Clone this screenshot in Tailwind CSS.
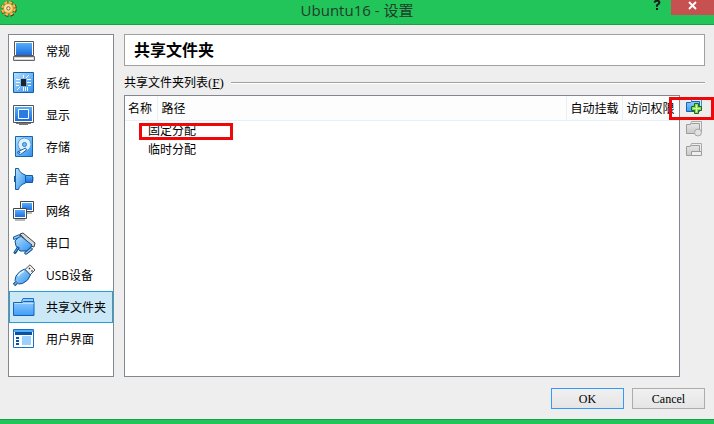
<!DOCTYPE html>
<html lang="zh-CN">
<head>
  <meta charset="UTF-8"/>
  <meta name="viewport" content="width=device-width, initial-scale=1.0"/>
  <title>Ubuntu16 - 设置</title>
  <script src="https://cdn.jsdelivr.net/npm/@tailwindcss/browser@4"></script>
</head>
<body class="min-h-screen flex flex-col bg-[#eeeeee] text-black text-[12px] leading-4 font-['Open_Sans','Noto_Sans_CJK_SC',sans-serif]">

  <!-- Shared gradients -->
  <svg class="absolute w-0 h-0" aria-hidden="true">
    <defs>
      <linearGradient id="blue" x1="0" y1="0" x2="0" y2="1">
        <stop offset="0" stop-color="#55aefb"/>
        <stop offset="1" stop-color="#1c6de0"/>
      </linearGradient>
      <linearGradient id="sky" x1="0" y1="0" x2="1" y2="1">
        <stop offset="0" stop-color="#b5e2ff"/>
        <stop offset="1" stop-color="#2f8fee"/>
      </linearGradient>
      <linearGradient id="folder" x1="0" y1="0" x2="0" y2="1">
        <stop offset="0" stop-color="#8fcbff"/>
        <stop offset="1" stop-color="#3f9bf8"/>
      </linearGradient>
      <linearGradient id="gray" x1="0" y1="0" x2="0" y2="1">
        <stop offset="0" stop-color="#e6e6e6"/>
        <stop offset="1" stop-color="#c9c9c9"/>
      </linearGradient>
    </defs>
  </svg>

  <!-- Title bar -->
  <header class="relative h-[25px] shrink-0 flex justify-center bg-[#22c55a] border-b border-[#1b9e48]">
    <svg class="absolute left-0 top-0 w-[17px] h-[17px]" viewBox="0 0 17 17">
      <circle cx="8.7" cy="8.800" r="6.300" fill="none" stroke="#6b3a0c" stroke-width="3.600" stroke-dasharray="3.200 1.750"/>
      <circle cx="8.400" cy="8.400" r="6" fill="none" stroke="#f6b850" stroke-width="2.800" stroke-dasharray="2.900 1.810"/>
      <circle cx="8.400" cy="8.400" r="5" fill="#f9c060" stroke="#c07a24" stroke-width=".6"/>
      <circle cx="8" cy="8" r="3.800" fill="#fde0a0"/>
      <circle cx="8.400" cy="8.400" r="1.700" fill="#e8f0d8" stroke="#8a4f12" stroke-width=".9"/>
    </svg>
    <h1 class="text-[15px] leading-5 text-[#1f3d2a]">Ubuntu16 - 设置</h1>
    <div class="absolute right-0 top-0 flex items-start">
      <button type="button" aria-label="帮助" class="w-7 h-3 text-[#1c1c1c]">
        <svg class="w-3 h-3 mx-auto" viewBox="0 0 12 12">
          <path d="M3.500 2.600Q3.700 .8 6 .8T8.400 2.500Q8.400 3.700 7 4.400T6 6.800" fill="none" stroke="currentColor" stroke-width="2"/>
          <path d="M5 8h2v2H5z" fill="currentColor"/>
        </svg>
      </button>
      <button type="button" aria-label="关闭" class="w-[43px] h-[15px] pb-1 bg-[#c75050]">
        <svg class="w-[9px] h-[9px] mx-auto" viewBox="0 0 9 9">
          <path d="M1 1l7 7M8 1L1 8" stroke="#fff" stroke-width="1.900"/>
        </svg>
      </button>
    </div>
  </header>

  <main class="grow flex flex-col px-2 pt-[9px] pb-[10px]">
    <div class="grow flex gap-[10px]">

      <!-- Categories -->
      <nav class="w-[106px] shrink-0 bg-white border border-[#828790]">
        <a href="#general" class="h-8 flex items-center gap-[9px] pl-1 pt-0.5">
          <svg class="w-6 h-6" viewBox="0 0 24 24">
            <path d="M1.500 1.500h19v14h-19z" fill="#fff" stroke="#555"/>
            <path d="M3 3h16v12H3z" fill="url(#blue)"/>
            <path d="M.5 16.500h21v4H.5z" fill="#d8d8d8" stroke="#666"/>
            <path d="M2 18.500h18" stroke="#fff"/>
          </svg>
          常规
        </a>
        <a href="#system" class="h-8 flex items-center gap-[9px] pl-1 pt-0.5">
          <svg class="w-6 h-6" viewBox="0 0 24 24">
            <path d="M.5 .5h20v20H.5z" fill="url(#sky)" stroke="#125fae"/>
            <path d="M8 7h5v7H8z" fill="#1c2530"/>
            <path d="M3 7.500h4M3 10.500h4M3 13.500h3M14 7.500h4M14 10.500h4M15 13.500h3M10.500 3v3M10.500 15v4M12.500 15v4M14.500 15v4M4 18l3-3M13 6l3-3" stroke="#fff"/>
          </svg>
          系统
        </a>
        <a href="#display" class="h-8 flex items-center gap-[9px] pl-1 pt-0.5">
          <svg class="w-6 h-6" viewBox="0 0 24 24">
            <path d="M.5 1.500h20v17H.5z" fill="#fff" stroke="#555"/>
            <path d="M2 3h17v14H2z" fill="url(#blue)"/>
            <path d="M5.500 5.500h10v9h-10z" fill="#2a7be2" stroke="#fff"/>
            <path d="M3 19.500h15M6 20.500h9" stroke="#777"/>
          </svg>
          显示
        </a>
        <a href="#storage" class="h-8 flex items-center gap-[9px] pl-1 pt-0.5">
          <svg class="w-6 h-6" viewBox="0 0 24 24">
            <path d="M2.500 .5h17v20h-17z" fill="url(#sky)" stroke="#1764ae"/>
            <circle cx="11.500" cy="8.500" r="6.500" fill="#dff1ff" stroke="#5c9fd8"/>
            <circle cx="11.500" cy="8.500" r="2" fill="#74bbf0" stroke="#2d7fc4"/>
            <path d="M4.500 16l8-4 1 2-6 4.500q-3 0-3-2.500z" fill="#fff" stroke="#1764ae"/>
            <circle cx="6.500" cy="16.500" r="1" fill="#1764ae"/>
          </svg>
          存储
        </a>
        <a href="#audio" class="h-8 flex items-center gap-[9px] pl-1 pt-0.5">
          <svg class="w-6 h-6" viewBox="0 0 24 24">
            <path d="M2.500 .5h3q1 4.500 7 6.500v8q-6 2-7 6.500h-3z" fill="url(#sky)" stroke="#145c9c"/>
            <path d="M12.500 7.500h7v7h-7z" fill="url(#blue)" stroke="#145c9c"/>
            <path d="M1 8h2v6H1z" fill="#145c9c"/>
            <path d="M20 9h1v4h-1z" fill="#8ec6f0"/>
          </svg>
          声音
        </a>
        <a href="#network" class="h-8 flex items-center gap-[9px] pl-1 pt-0.5">
          <svg class="w-6 h-6" viewBox="0 0 24 24">
            <path d="M7.500 1.500h13v10h-13z" fill="#fff" stroke="#444"/>
            <path d="M9 3h10v7H9z" fill="url(#blue)"/>
            <path d="M14 13h5" stroke="#777"/>
            <path d="M.5 8.500h13v10H.5z" fill="#fff" stroke="#444"/>
            <path d="M2 10h10v7H2z" fill="url(#blue)"/>
            <path d="M2 20h10" stroke="#777"/>
          </svg>
          网络
        </a>
        <a href="#serial" class="h-8 flex items-center gap-[9px] pl-1 pt-0.5">
          <svg class="w-6 h-6" viewBox="0 0 24 24">
            <path d="M7 2l3-1 12 10-1 4-3-1z" fill="#d9d9d9" stroke="#444"/>
            <path d="M7 3.500L19 13l-4 6H7l-4-5-1-5z" fill="url(#sky)" stroke="#12508c"/>
            <path d="M1.500 6l4.500-2M13 21l5-4" stroke="#12508c" stroke-width="3.500" stroke-linecap="round"/>
            <path d="M1.500 6l4.500-2M13 21l5-4" stroke="#8ccaf8" stroke-width="1.500" stroke-linecap="round"/>
            <path d="M5 16l-3 4.500" stroke="#12508c" stroke-width="3" stroke-linecap="round"/>
            <path d="M5 16l-3 4" stroke="#5fb0f0" stroke-linecap="round"/>
          </svg>
          串口
        </a>
        <a href="#usb" class="h-8 flex items-center gap-[9px] pl-1 pt-0.5">
          <svg class="w-6 h-6" viewBox="0 0 24 24">
            <path d="M12 5.500L17 .8 22 6l-5 5z" fill="#eee" stroke="#555"/>
            <path d="M16 4l1 1M18.500 6.500l1 1" stroke="#333" stroke-width="1.500"/>
            <path d="M11.500 5L17.500 11q-2 6-8 8.500l-4 .5-3.500-3.500L3 12q3-5 8.500-7z" fill="url(#sky)" stroke="#12508c"/>
            <path d="M5 12q2-3 6-5" fill="none" stroke="#d8f0ff" stroke-width="1.500"/>
            <path d="M3.500 18.500L1 21" stroke="#12508c" stroke-width="3.500"/>
            <path d="M3.500 18.500L1.500 20.500" stroke="#6cb8f4" stroke-width="1.500"/>
          </svg>
          USB设备
        </a>
        <a href="#shared" aria-current="page" class="h-8 flex items-center gap-[9px] pl-[3px] pt-0.5 bg-[#cbe8f6] border border-[#26a0da]">
          <svg class="w-6 h-6" viewBox="0 0 24 24">
            <path d="M8.500 5.500l1.500-3h10.500V8h-12z" fill="#8fcbff" stroke="#1c6fca"/>
            <path d="M.5 6.500h8.500l1.500-1h10.500v14H.5z" fill="url(#folder)" stroke="#1563b8"/>
            <path d="M1.500 7.500h19" stroke="#b5deff"/>
          </svg>
          共享文件夹
        </a>
        <a href="#interface" class="h-8 flex items-center gap-[9px] pl-1 pt-0.5">
          <svg class="w-6 h-6" viewBox="0 0 24 24">
            <path d="M.5 1.500h20v18H.5z" fill="#fff" stroke="#1b6ec8"/>
            <path d="M1 2h19v2H1z" fill="#4fb0f8"/>
            <path d="M2 4h17v3H2z" fill="#0b4fa6"/>
            <path d="M3 9h3v2H3zM3 12h3v2H3zM3 15h3v2H3z" fill="#0b4fa6"/>
            <path d="M9 8h9v9H9z" fill="#9bd0ff"/>
          </svg>
          用户界面
        </a>
      </nav>

      <section class="grow flex flex-col pr-px">
        <h2 class="h-8 flex items-center pl-[9px] bg-white border border-[#a0a0a0] text-[16px] font-bold">共享文件夹</h2>

        <div class="flex items-center gap-[7px] mt-[9px] mb-1">
          <h3>共享文件夹列表<span class="font-['Liberation_Serif',serif] text-[13px]">(<u>F</u>)</span></h3>
          <div class="grow h-0.5 bg-white border-t border-[#a0a0a0]"></div>
        </div>

        <div class="grow flex gap-[6px]">
          <div class="grow bg-white border border-[#828790]">
            <table class="w-full table-fixed text-left">
              <thead>
                <tr class="h-6 border-b border-[#e5f0fb] bg-[#fdfdfe]">
                  <th class="w-8 pl-[3px] pt-0.5 font-normal whitespace-nowrap border-r border-[#e5f0fb]">名称</th>
                  <th class="pl-1 pt-0.5 font-normal border-r border-[#e5f0fb]">路径</th>
                  <th class="w-14 pl-1 pt-0.5 font-normal whitespace-nowrap border-r border-[#e5f0fb]">自动挂载</th>
                  <th class="w-[57px] pl-1 pt-0.5 font-normal whitespace-nowrap">访问权限</th>
                </tr>
              </thead>
              <tbody>
                <tr class="h-[19px]">
                  <td colspan="4" class="relative pl-[23px] pt-0.5">
                    固定分配
                    <span class="absolute left-[14px] top-[2px] w-[94px] h-[17px] border-3 border-[#f00808]"></span>
                  </td>
                </tr>
                <tr class="h-[19px]">
                  <td colspan="4" class="pl-[23px] pt-0.5">临时分配</td>
                </tr>
              </tbody>
            </table>
          </div>

          <!-- Folder actions -->
          <div class="relative w-[19px] shrink-0 flex flex-col gap-[6px] pt-1">
            <button type="button" aria-label="添加共享文件夹" class="w-4 h-4">
              <svg class="w-4 h-4" viewBox="0 0 16 16">
                <path d="M5.500 3V.5h10V11" fill="#d8efff" stroke="#3a8fd0"/>
                <path d="M.5 3.500h4l1-1h8v10H.5z" fill="url(#folder)" stroke="#1563b8"/>
                <path d="M8.500 4.500h4v3h3v4h-3v3h-4v-3h-3v-4h3z" fill="#8be04a" stroke="#1f6a1a"/>
                <path d="M10.500 6v7M7 9.500h7" stroke="#d4f7ae"/>
              </svg>
            </button>
            <button type="button" aria-label="编辑共享文件夹" disabled class="w-4 h-4">
              <svg class="w-4 h-4" viewBox="0 0 16 16">
                <path d="M4.500 3l1-2.500h10v11" fill="#eee" stroke="#aaa"/>
                <path d="M.5 3.500h4l1-1h8v10H.5z" fill="url(#gray)" stroke="#9c9c9c"/>
                <circle cx="12" cy="11.500" r="3.500" fill="#e2e2e2" stroke="#a6a6a6"/>
              </svg>
            </button>
            <button type="button" aria-label="删除共享文件夹" disabled class="w-4 h-4">
              <svg class="w-4 h-4" viewBox="0 0 16 16">
                <path d="M4.500 3l1-2.500h10v11" fill="#eee" stroke="#aaa"/>
                <path d="M.5 3.500h4l1-1h8v10H.5z" fill="url(#gray)" stroke="#9c9c9c"/>
                <path d="M5.500 8.500h10v4h-10z" fill="#eee" stroke="#9c9c9c"/>
              </svg>
            </button>
            <span class="absolute -left-[17px] top-[2px] w-[45px] h-[23px] border-3 border-[#f00808]"></span>
          </div>
        </div>
      </section>
    </div>

    <div class="flex justify-end gap-2 pt-[11px] pr-px font-['Liberation_Serif',serif] text-[12px]">
      <button type="button" class="w-[73px] h-[21px] bg-linear-to-b from-[#f0f0f0] to-[#e5e5e5] border border-[#3399ff]">OK</button>
      <button type="button" class="w-[73px] h-[21px] bg-linear-to-b from-[#f0f0f0] to-[#e5e5e5] border border-[#acacac]">Cancel</button>
    </div>
  </main>

  <footer class="h-[5px] shrink-0 bg-[#22c55a] border-t border-[#1b9e48]"></footer>
</body>
</html>
